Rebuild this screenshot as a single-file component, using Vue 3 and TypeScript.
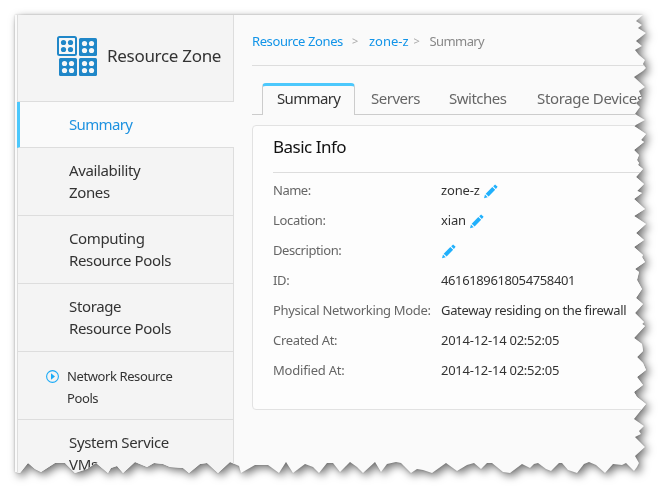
<script setup lang="ts">
interface NavItem { lines: string[]; kind: 'active' | 'normal' | 'sub' }
interface InfoRow { label: string; value: string; key: string; editable: boolean }

const nav: NavItem[] = [
  { lines: ['Summary'], kind: 'active' },
  { lines: ['Availability', 'Zones'], kind: 'normal' },
  { lines: ['Computing', 'Resource Pools'], kind: 'normal' },
  { lines: ['Storage', 'Resource Pools'], kind: 'normal' },
  { lines: ['Network Resource', 'Pools'], kind: 'sub' },
  { lines: ['System Service', 'VMs'], kind: 'normal' },
]

const tabs: string[] = ['Summary', 'Servers', 'Switches', 'Storage Devices']

const rows: InfoRow[] = [
  { label: 'Name:', value: 'zone-z', key: 'name', editable: true },
  { label: 'Location:', value: 'xian', key: 'location', editable: true },
  { label: 'Description:', value: '', key: 'description', editable: true },
  { label: 'ID:', value: '4616189618054758401', key: 'id', editable: false },
  { label: 'Physical Networking Mode:', value: 'Gateway residing on the firewall', key: 'mode', editable: false },
  { label: 'Created At:', value: '2014-12-14 02:52:05', key: 'created', editable: false },
  { label: 'Modified At:', value: '2014-12-14 02:52:05', key: 'modified', editable: false },
]
</script>

<template>
  <div class="stage">
    <div class="sheet">
      <aside class="sidebar">
        <header class="brand">
          <svg class="logo" width="40" height="40" viewBox="0 0 40 40">
            <rect x="1" y="1" width="18" height="18" rx="1.5" fill="#f7f7f7" stroke="#2087c8" stroke-width="2" />
            <rect x="22" y="2" width="18" height="18" rx="1.5" fill="#2087c8" />
            <rect x="2" y="22" width="18" height="18" rx="1.5" fill="#2087c8" />
            <rect x="22" y="22" width="18" height="18" rx="1.5" fill="#2087c8" />
            <g fill="#2087c8">
              <circle cx="6.5" cy="6.5" r="2.6" /><circle cx="13.5" cy="6.5" r="2.6" />
              <circle cx="6.5" cy="13.5" r="2.6" /><circle cx="13.5" cy="13.5" r="2.6" />
            </g>
            <g fill="#f7f7f7">
              <circle cx="27.5" cy="7.5" r="2.6" /><circle cx="34.5" cy="7.5" r="2.6" />
              <circle cx="27.5" cy="14.5" r="2.6" /><circle cx="34.5" cy="14.5" r="2.6" />
              <circle cx="7.5" cy="27.5" r="2.6" /><circle cx="14.5" cy="27.5" r="2.6" />
              <circle cx="7.5" cy="34.5" r="2.6" /><circle cx="14.5" cy="34.5" r="2.6" />
              <circle cx="27.5" cy="27.5" r="2.6" /><circle cx="34.5" cy="27.5" r="2.6" />
              <circle cx="27.5" cy="34.5" r="2.6" /><circle cx="34.5" cy="34.5" r="2.6" />
            </g>
          </svg>
          <span class="brand-name">Resource Zone</span>
        </header>
        <nav>
          <div v-for="item in nav" :key="item.lines.join(' ')" class="nav-item" :class="item.kind">
            <svg v-if="item.kind === 'sub'" class="play" width="13" height="13" viewBox="0 0 13 13">
              <circle cx="6.5" cy="6.5" r="5.9" fill="none" stroke="#1cabf7" stroke-width="1.1" />
              <path d="M5 3.2 L9 6.5 L5 9.8 Z" fill="#1cabf7" />
            </svg>
            <div class="nav-text">
              <span v-for="line in item.lines" :key="line">{{ line }}</span>
            </div>
          </div>
        </nav>
      </aside>

      <main class="content">
        <div class="crumbs">
          <a class="c1">Resource Zones</a><i class="s1">&gt;</i><a class="c2">zone-z</a><i class="s2">&gt;</i><span class="c3">Summary</span>
        </div>
        <div class="tabs">
          <div v-for="(tab, i) in tabs" :key="tab" class="tab" :class="['t' + i, { on: i === 0 }]">{{ tab }}</div>
        </div>
        <section class="card">
          <h2><span>Basic Info</span></h2>
          <dl>
            <div v-for="row in rows" :key="row.key" class="row" :class="row.key">
              <dt><span>{{ row.label }}</span></dt>
              <dd>
                <span v-if="row.value">{{ row.value }}</span>
                <svg v-if="row.editable" class="pencil" width="15" height="15" viewBox="0 0 15 15" fill="#20b0fc">
                  <path d="M1 14.2 L2 10.6 L4.7 13.3 Z M2.7 9.7 L9.3 3.1 L12.2 5.8 L5.6 12.5 Z M10.2 2.3 L12.1 0.6 L14.6 2.8 L12.9 4.9 Z" />
                </svg>
              </dd>
            </div>
          </dl>
        </section>
      </main>
    </div>
  </div>
</template>

<style>
body { margin: 0; background: #fff; overflow: hidden; }
</style>

<style scoped>
* { box-sizing: border-box; }
.stage {
  width: 668px;
  height: 495px;
  font-family: "Noto Sans", "Open Sans", sans-serif;
  color: #333;
  filter: drop-shadow(0 0 1px rgba(0, 0, 0, .2)) drop-shadow(3px 3px 4.5px rgba(0, 0, 0, .55));
}
.sheet {
  display: flex;
  width: 668px;
  height: 495px;
  padding: 15px 0 0 17px;
  background: #fafafa;
  overflow: hidden;
  clip-path: polygon(15px 15px, 643px 15px, 636px 21px, 642px 25px, 638px 28px, 646px 33px, 636px 41px, 642px 46px, 635px 50px, 639px 55px, 645px 60px, 643px 64px, 646px 68px, 643px 71px, 634px 77px, 645px 87px, 639px 91px, 642px 98px, 636px 103px, 640px 107px, 635px 114px, 645px 120px, 634px 126px, 646px 134px, 641px 140px, 644px 142px, 634px 150px, 639px 155px, 637px 160px, 639px 163px, 638px 165px, 643px 169px, 636px 177px, 644px 184px, 637px 191px, 642px 193px, 634px 199px, 645px 209px, 634px 216px, 646px 224px, 636px 233px, 644px 240px, 634px 247px, 643px 255px, 642px 257px, 645px 262px, 635px 269px, 639px 272px, 637px 280px, 642px 289px, 636px 298px, 643px 304px, 635px 313px, 644px 322px, 642px 324px, 645px 326px, 634px 338px, 642px 344px, 643px 351px, 637px 357px, 643px 363px, 646px 370px, 637px 377px, 643px 385px, 634px 392px, 637px 397px, 646px 404px, 634px 419px, 644px 426px, 639px 431px, 641px 434px, 635px 437px, 645px 447px, 635px 456px, 639px 463px, 637px 467px, 634px 471px, 626px 463px, 622px 465px, 613px 464px, 605px 473px, 596px 465px, 589px 462px, 584px 464px, 577px 473px, 568px 470px, 562px 463px, 559px 463px, 551px 471px, 546px 469px, 538px 463px, 534px 464px, 530px 468px, 522px 464px, 510px 473px, 503px 472px, 492px 463px, 487px 463px, 481px 469px, 474px 463px, 467px 465px, 457px 471px, 446px 463px, 432px 473px, 423px 470px, 417px 469px, 411px 473px, 401px 463px, 396px 462px, 387px 464px, 381px 472px, 375px 462px, 363px 473px, 357px 467px, 350px 462px, 340px 472px, 333px 463px, 327px 463px, 319px 473px, 313px 467px, 305px 464px, 301px 467px, 293px 473px, 286px 462px, 279px 473px, 268px 465px, 255px 465px, 241px 473px, 239px 466px, 230px 462px, 218px 473px, 207px 463px, 200px 464px, 189px 473px, 183px 468px, 170px 467px, 163px 464px, 154px 463px, 147px 467px, 135px 462px, 123px 473px, 117px 466px, 111px 468px, 108px 473px, 96px 463px, 87px 469px, 75px 473px, 65px 463px, 55px 463px, 41px 472px, 35px 469px, 28px 463px, 20px 473px, 15px 472px);
}
.sidebar { width: 217px; flex: none; }
.brand {
  height: 87px;
  display: flex;
  padding: 21px 0 0 39px;
  background: #f4f4f4;
  border: 1px solid #ddd;
  border-top: 0;
}
.logo { flex: none; }
.brand-name { margin-left: 10px; font-size: 17px; letter-spacing: -.3px; line-height: 40px; white-space: nowrap; }
.nav-item {
  display: flex;
  height: 68px;
  padding: 11px 0 0 51px;
  background: #f4f4f4;
  border: 1px solid #ddd;
  border-top: 0;
  font-size: 15px;
  letter-spacing: -.36px;
  line-height: 22px;
}
.nav-text span { display: block; white-space: nowrap; width: max-content; }
.active {
  height: 46px;
  padding: 11px 0 0 49px;
  background: #fafafa;
  border-left: 3px solid #4cc8fc;
  border-right: 0;
  color: #1e92e0;
  letter-spacing: -.65px;
}
.sub { padding: 13px 0 0 28px; font-size: 13px; letter-spacing: -.4px; }
.sub .nav-text { margin-left: 8px; }
.play { margin-top: 5px; flex: none; }

.content { flex: none; width: 434px; padding-left: 18px; }
.crumbs {
  display: flex;
  height: 51px;
  padding-top: 15px;
  border-bottom: 1px solid #ddd;
  font-size: 13px;
  line-height: 22px;
  color: #888;
  white-space: nowrap;
}
.crumbs a { color: #1294e8; }
.crumbs i { font-style: normal; color: #aaa; width: 8px; font-size: 11px; }
.c1 { letter-spacing: -.4px; }
.c3 { letter-spacing: -.6px; }
.s1 { margin: 0 9px; }
.s2 { margin: 0 8px 0 5px; }
.tabs {
  display: flex;
  margin-top: 17px;
  height: 32px;
  padding-left: 10px;
  border-bottom: 1px solid #ccc;
  font-size: 15px;
  letter-spacing: -.5px;
  line-height: 30px;
  color: #666;
  white-space: nowrap;
}
.tab { flex: none; }
.tab.on {
  width: 93px;
  height: 32px;
  padding-left: 14px;
  border: 1px solid #ccc;
  border-top: 3px solid #4cc8fc;
  border-bottom: 0;
  border-radius: 4px 4px 0 0;
  background: #fafafa;
  color: #333;
  line-height: 24px;
  letter-spacing: -.65px;
}
.t1 { margin-left: 16px; width: 78px; }
.t2 { width: 88px; }
.t3 { letter-spacing: -.35px; }
.card {
  margin-top: 10px;
  height: 285px;
  width: 440px;
  padding-left: 20px;
  background: #fdfdfd;
  border: 1px solid #e2e2e2;
  border-radius: 4px;
}
h2 {
  margin: 0;
  height: 47px;
  border-bottom: 1px solid #ddd;
  font-size: 17px;
  font-weight: 400;
  letter-spacing: -.5px;
  line-height: 42px;
  color: #111;
}
dl { margin: 2px 0 0; font-size: 13px; line-height: 30px; }
.row { display: flex; height: 30px; white-space: nowrap; letter-spacing: -.33px; }
dt { width: 168px; flex: none; color: #666; }
dd { margin: 0; display: flex; }
.name dt { letter-spacing: -.5px; }
.name dd, .location dd { letter-spacing: -.15px; }
.description dt { letter-spacing: -.42px; }
.id dd { letter-spacing: -.38px; }
.created dd, .modified dd { letter-spacing: -.25px; }
.modified dt { letter-spacing: -.2px; }
.pencil { margin: 9px 0 0 3px; }
.description .pencil { margin-left: 0; }
</style>
